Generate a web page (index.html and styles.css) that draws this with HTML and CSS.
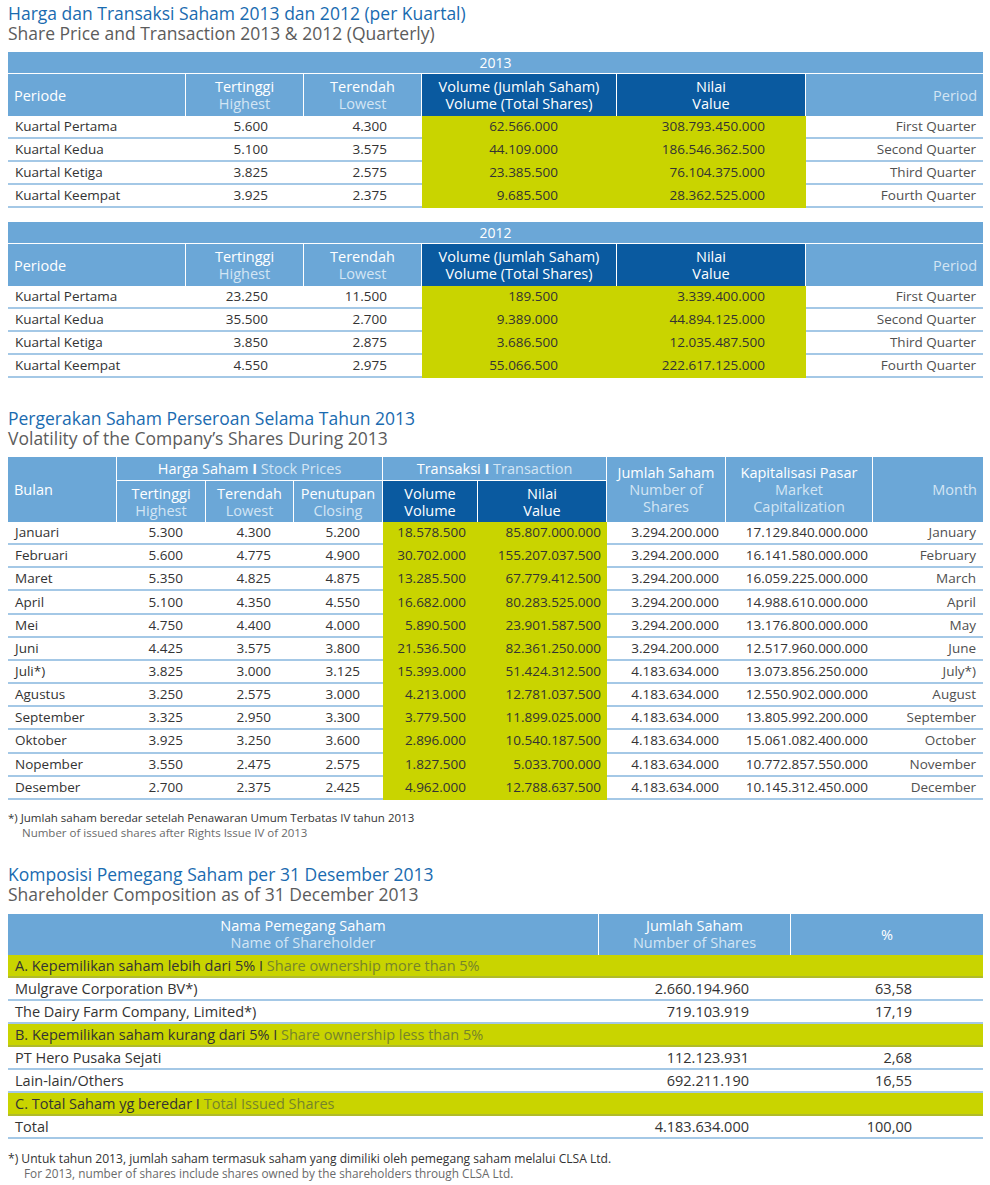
FILE: index.html
```html
<!DOCTYPE html>
<html>
<head>
<meta charset="utf-8">
<link rel="stylesheet" href="styles.css">
</head>
<body>
<div class="page">
  <h1 class="title">Harga dan Transaksi Saham 2013 dan 2012 (per Kuartal)</h1>
  <h2 class="subtitle">Share Price and Transaction 2013 &amp; 2012 (Quarterly)</h2>

  <table class="grid q">
    <colgroup><col class="c1"><col class="c2"><col class="c3"><col class="c4"><col class="c5"><col class="c6"></colgroup>
    <thead>
      <tr class="yr"><th colspan="6">2013</th></tr>
      <tr class="hd">
        <th class="l">Periode</th>
        <th>Tertinggi<br><span class="en">Highest</span></th>
        <th>Terendah<br><span class="en">Lowest</span></th>
        <th class="dk">Volume (Jumlah Saham)<br>Volume (Total Shares)</th>
        <th class="dk">Nilai<br>Value</th>
        <th class="r en last">Period</th>
      </tr>
    </thead>
    <tbody>
      <tr><td class="l">Kuartal Pertama</td><td class="n1">5.600</td><td class="n2">4.300</td><td class="g n3">62.566.000</td><td class="g n4">308.793.450.000</td><td class="r">First Quarter</td></tr>
      <tr><td class="l">Kuartal Kedua</td><td class="n1">5.100</td><td class="n2">3.575</td><td class="g n3">44.109.000</td><td class="g n4">186.546.362.500</td><td class="r">Second Quarter</td></tr>
      <tr><td class="l">Kuartal Ketiga</td><td class="n1">3.825</td><td class="n2">2.575</td><td class="g n3">23.385.500</td><td class="g n4">76.104.375.000</td><td class="r">Third Quarter</td></tr>
      <tr><td class="l">Kuartal Keempat</td><td class="n1">3.925</td><td class="n2">2.375</td><td class="g n3">9.685.500</td><td class="g n4">28.362.525.000</td><td class="r">Fourth Quarter</td></tr>
    </tbody>
  </table>

  <table class="grid q q2">
    <colgroup><col class="c1"><col class="c2"><col class="c3"><col class="c4"><col class="c5"><col class="c6"></colgroup>
    <thead>
      <tr class="yr"><th colspan="6">2012</th></tr>
      <tr class="hd">
        <th class="l">Periode</th>
        <th>Tertinggi<br><span class="en">Highest</span></th>
        <th>Terendah<br><span class="en">Lowest</span></th>
        <th class="dk">Volume (Jumlah Saham)<br>Volume (Total Shares)</th>
        <th class="dk">Nilai<br>Value</th>
        <th class="r en last">Period</th>
      </tr>
    </thead>
    <tbody>
      <tr><td class="l">Kuartal Pertama</td><td class="n1">23.250</td><td class="n2">11.500</td><td class="g n3">189.500</td><td class="g n4">3.339.400.000</td><td class="r">First Quarter</td></tr>
      <tr><td class="l">Kuartal Kedua</td><td class="n1">35.500</td><td class="n2">2.700</td><td class="g n3">9.389.000</td><td class="g n4">44.894.125.000</td><td class="r">Second Quarter</td></tr>
      <tr><td class="l">Kuartal Ketiga</td><td class="n1">3.850</td><td class="n2">2.875</td><td class="g n3">3.686.500</td><td class="g n4">12.035.487.500</td><td class="r">Third Quarter</td></tr>
      <tr><td class="l">Kuartal Keempat</td><td class="n1">4.550</td><td class="n2">2.975</td><td class="g n3">55.066.500</td><td class="g n4">222.617.125.000</td><td class="r">Fourth Quarter</td></tr>
    </tbody>
  </table>

  <h1 class="title t2">Pergerakan Saham Perseroan Selama Tahun 2013</h1>
  <h2 class="subtitle">Volatility of the Company’s Shares During 2013</h2>

  <table class="grid v">
    <colgroup><col class="v1"><col class="v2"><col class="v3"><col class="v4"><col class="v5"><col class="v6"><col class="v7"><col class="v8"><col class="v9"></colgroup>
    <thead>
      <tr class="hr1">
        <th rowspan="2" class="l bulan">Bulan</th>
        <th colspan="3">Harga Saham <b class="sep">I</b> <span class="en">Stock Prices</span></th>
        <th colspan="2">Transaksi <b class="sep">I</b> <span class="en">Transaction</span></th>
        <th rowspan="2" class="tall">Jumlah Saham<br><span class="en">Number of<br>Shares</span></th>
        <th rowspan="2" class="tall">Kapitalisasi Pasar<br><span class="en">Market<br>Capitalization</span></th>
        <th rowspan="2" class="r en last">Month</th>
      </tr>
      <tr class="hd hd2">
        <th>Tertinggi<br><span class="en">Highest</span></th>
        <th>Terendah<br><span class="en">Lowest</span></th>
        <th>Penutupan<br><span class="en">Closing</span></th>
        <th class="dk">Volume<br>Volume</th>
        <th class="dk">Nilai<br>Value</th>
      </tr>
    </thead>
    <tbody>
      <tr><td class="l">Januari</td><td class="m">5.300</td><td class="m">4.300</td><td class="m">5.200</td><td class="g mv">18.578.500</td><td class="g mn">85.807.000.000</td><td class="mj">3.294.200.000</td><td class="mk">17.129.840.000.000</td><td class="r">January</td></tr>
      <tr><td class="l">Februari</td><td class="m">5.600</td><td class="m">4.775</td><td class="m">4.900</td><td class="g mv">30.702.000</td><td class="g mn">155.207.037.500</td><td class="mj">3.294.200.000</td><td class="mk">16.141.580.000.000</td><td class="r">February</td></tr>
      <tr><td class="l">Maret</td><td class="m">5.350</td><td class="m">4.825</td><td class="m">4.875</td><td class="g mv">13.285.500</td><td class="g mn">67.779.412.500</td><td class="mj">3.294.200.000</td><td class="mk">16.059.225.000.000</td><td class="r">March</td></tr>
      <tr><td class="l">April</td><td class="m">5.100</td><td class="m">4.350</td><td class="m">4.550</td><td class="g mv">16.682.000</td><td class="g mn">80.283.525.000</td><td class="mj">3.294.200.000</td><td class="mk">14.988.610.000.000</td><td class="r">April</td></tr>
      <tr><td class="l">Mei</td><td class="m">4.750</td><td class="m">4.400</td><td class="m">4.000</td><td class="g mv">5.890.500</td><td class="g mn">23.901.587.500</td><td class="mj">3.294.200.000</td><td class="mk">13.176.800.000.000</td><td class="r">May</td></tr>
      <tr><td class="l">Juni</td><td class="m">4.425</td><td class="m">3.575</td><td class="m">3.800</td><td class="g mv">21.536.500</td><td class="g mn">82.361.250.000</td><td class="mj">3.294.200.000</td><td class="mk">12.517.960.000.000</td><td class="r">June</td></tr>
      <tr><td class="l">Juli*)</td><td class="m">3.825</td><td class="m">3.000</td><td class="m">3.125</td><td class="g mv">15.393.000</td><td class="g mn">51.424.312.500</td><td class="mj">4.183.634.000</td><td class="mk">13.073.856.250.000</td><td class="r">July*)</td></tr>
      <tr><td class="l">Agustus</td><td class="m">3.250</td><td class="m">2.575</td><td class="m">3.000</td><td class="g mv">4.213.000</td><td class="g mn">12.781.037.500</td><td class="mj">4.183.634.000</td><td class="mk">12.550.902.000.000</td><td class="r">August</td></tr>
      <tr><td class="l">September</td><td class="m">3.325</td><td class="m">2.950</td><td class="m">3.300</td><td class="g mv">3.779.500</td><td class="g mn">11.899.025.000</td><td class="mj">4.183.634.000</td><td class="mk">13.805.992.200.000</td><td class="r">September</td></tr>
      <tr><td class="l">Oktober</td><td class="m">3.925</td><td class="m">3.250</td><td class="m">3.600</td><td class="g mv">2.896.000</td><td class="g mn">10.540.187.500</td><td class="mj">4.183.634.000</td><td class="mk">15.061.082.400.000</td><td class="r">October</td></tr>
      <tr><td class="l">Nopember</td><td class="m">3.550</td><td class="m">2.475</td><td class="m">2.575</td><td class="g mv">1.827.500</td><td class="g mn">5.033.700.000</td><td class="mj">4.183.634.000</td><td class="mk">10.772.857.550.000</td><td class="r">November</td></tr>
      <tr><td class="l">Desember</td><td class="m">2.700</td><td class="m">2.375</td><td class="m">2.425</td><td class="g mv">4.962.000</td><td class="g mn">12.788.637.500</td><td class="mj">4.183.634.000</td><td class="mk">10.145.312.450.000</td><td class="r">December</td></tr>
    </tbody>
  </table>

  <div class="note">
    <div>*) Jumlah saham beredar setelah Penawaran Umum Terbatas IV tahun 2013</div>
    <div class="en-note">Number of issued shares after Rights Issue IV of 2013</div>
  </div>

  <h1 class="title t3">Komposisi Pemegang Saham per 31 Desember 2013</h1>
  <h2 class="subtitle">Shareholder Composition as of 31 December 2013</h2>

  <table class="grid s">
    <colgroup><col class="s1"><col class="s2"><col class="s3"></colgroup>
    <thead>
      <tr class="hd">
        <th>Nama Pemegang Saham<br><span class="en">Name of Shareholder</span></th>
        <th>Jumlah Saham<br><span class="en">Number of Shares</span></th>
        <th class="last">%</th>
      </tr>
    </thead>
    <tbody>
      <tr class="sec"><td colspan="3">A. Kepemilikan saham lebih dari 5% <b class="sep2">I</b> <span class="en2">Share ownership more than 5%</span></td></tr>
      <tr><td class="l">Mulgrave Corporation BV*)</td><td class="sj">2.660.194.960</td><td class="sp">63,58</td></tr>
      <tr><td class="l">The Dairy Farm Company, Limited*)</td><td class="sj">719.103.919</td><td class="sp">17,19</td></tr>
      <tr class="sec"><td colspan="3">B. Kepemilikan saham kurang dari 5% <b class="sep2">I</b> <span class="en2">Share ownership less than 5%</span></td></tr>
      <tr><td class="l">PT Hero Pusaka Sejati</td><td class="sj">112.123.931</td><td class="sp">2,68</td></tr>
      <tr><td class="l">Lain-lain/Others</td><td class="sj">692.211.190</td><td class="sp">16,55</td></tr>
      <tr class="sec"><td colspan="3">C. Total Saham yg beredar <b class="sep2">I</b> <span class="en2">Total Issued Shares</span></td></tr>
      <tr><td class="l">Total</td><td class="sj">4.183.634.000</td><td class="sp">100,00</td></tr>
    </tbody>
  </table>

  <div class="note note2">
    <div>*) Untuk tahun 2013, jumlah saham termasuk saham yang dimiliki oleh pemegang saham melalui CLSA Ltd.</div>
    <div class="en-note">For 2013, number of shares include shares owned by the shareholders through CLSA Ltd.</div>
  </div>
</div>
</body>
</html>
```

FILE: styles.css
```css
* { box-sizing: border-box; }
html, body { margin: 0; padding: 0; background: #ffffff; }
body {
  font-family: "Open Sans", "Noto Sans", "Liberation Sans", sans-serif;
  color: #333333;
}
.page {
  width: 990px;
  padding: 3px 7px 0 8px;
}
.title {
  margin: 0;
  font-size: 17.5px;
  line-height: 20px;
  font-weight: 400;
  color: #1a6bb0;
}
.subtitle {
  margin: 0;
  font-size: 17.5px;
  line-height: 20px;
  font-weight: 400;
  color: #5c5c5c;
}
.t2 { margin-top: 30px; }
.t3 { margin-top: 24px; }

.grid {
  width: 975px;
  table-layout: fixed;
  border-collapse: separate;
  border-spacing: 0;
  font-size: 13.5px;
}
.q { margin-top: 9px; }
.q2 { margin-top: 14px; }
.v { margin-top: 9px; }
.s { margin-top: 10px; font-size: 14.5px; }

.c1 { width: 178px; }
.c2 { width: 118px; }
.c3 { width: 118px; }
.c4 { width: 195px; }
.c5 { width: 189px; }
.c6 { width: 177px; }

.v1 { width: 109px; }
.v2 { width: 89px; }
.v3 { width: 88px; }
.v4 { width: 89px; }
.v5 { width: 95px; }
.v6 { width: 129px; }
.v7 { width: 119px; }
.v8 { width: 147px; }
.v9 { width: 110px; }

.s1 { width: 591px; }
.s2 { width: 192px; }
.s3 { width: 192px; }

th {
  background: #6ba7d7;
  color: #ffffff;
  font-weight: 400;
  font-size: 14.5px;
  text-align: center;
  line-height: 17px;
  padding: 0 6px;
  border-right: 1px solid #ffffff;
  vertical-align: middle;
}
th.last { border-right: 0; }
th.l { text-align: left; }
th.r { text-align: right; }
th .en, th.en { color: #d3e5f4; }
th.dk { background: #0a5aa0; color: #ffffff; }

.yr th {
  height: 22px;
  border-bottom: 1px solid #ffffff;
  border-right: 0;
  padding: 0;
  font-size: 14px;
}
.hd th { height: 42px; }
.hd2 th { height: 41px; }
.s .hd th { height: 41px; }
.hr1 th { height: 24px; border-bottom: 1px solid #ffffff; }
.hr1 th.bulan, .hr1 th.tall, .hr1 th.last { border-bottom: 0; }
.sep { font-weight: 700; color: #ffffff; }

td {
  height: 23px;
  padding: 0 7px;
  line-height: 17px;
  border-bottom: 2px solid #a4c8e6;
  white-space: nowrap;
  text-align: right;
  vertical-align: middle;
}
.v td { height: 23.17px; }
td.l { text-align: left; }
td.g { background: #c9d400; border-bottom-color: #c9d400; }

.q .n1 { padding-right: 36px; }
.q .n2 { padding-right: 35px; }
.q .n3 { padding-right: 59px; }
.q .n4 { padding-right: 41px; }
.q td.r { color: #505050; }
.v td.r { color: #505050; }

.v .m { padding-right: 23px; }
.v .mv { padding-right: 12px; }
.v .mn { padding-right: 6px; }
.v .mj { padding-right: 7px; }
.v .mk { padding-right: 5px; }

.s .sj { padding-right: 42px; }
.s .sp { padding-right: 71px; }
.sec td {
  background: #c9d400;
  text-align: left;
  border-bottom: 2px solid #b0bb2a;
}
.sep2 { font-weight: 400; }
.en2 { color: #76842a; }

.note {
  margin-top: 10px;
  font-size: 11.5px;
  line-height: 15px;
  color: #333333;
}
.en-note { padding-left: 14px; color: #6a6a6a; }
.note2 { margin-top: 12px; font-size: 12.1px; }
.note2 .en-note { padding-left: 16px; font-size: 11.8px; }
```
